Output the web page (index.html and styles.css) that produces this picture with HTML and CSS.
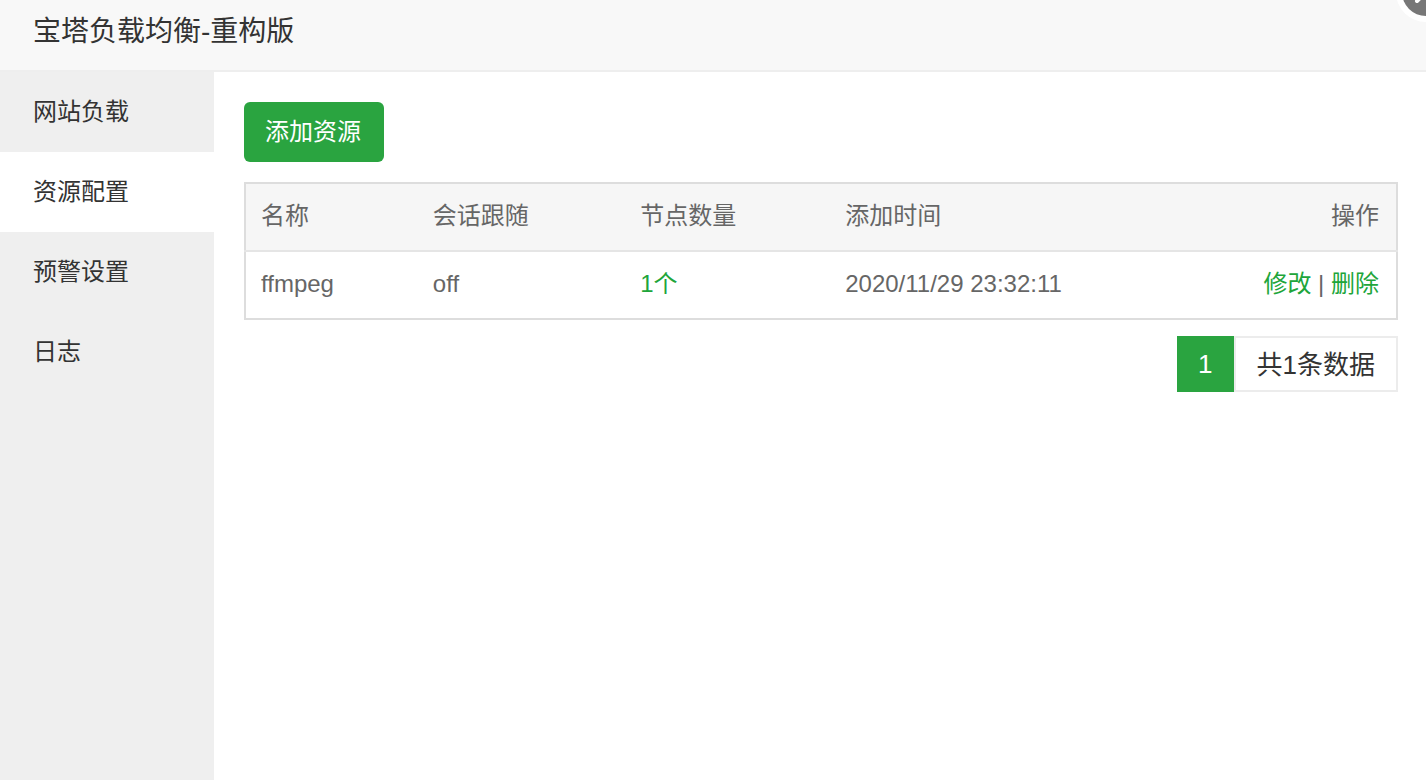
FILE: index.html
```html
<!DOCTYPE html>
<html lang="zh-CN">
<head>
    <meta charset="UTF-8">
    <meta name="viewport" content="width=device-width, initial-scale=1.0">
    <title>宝塔负载均衡-重构版</title>
    <link rel="stylesheet" href="styles.css">
</head>
<body>

    <header class="title-bar">
        <h1>宝塔负载均衡-重构版</h1>
        <button class="close-btn" type="button" aria-label="关闭">
            <svg width="60" height="60" viewBox="0 0 60 60">
                <circle cx="30" cy="30" r="30" fill="#fff"/>
                <circle cx="30" cy="30" r="24" fill="#777"/>
                <path d="M21 39 39 21M21 21 39 39" stroke="#fff" stroke-width="4" stroke-linecap="round"/>
            </svg>
        </button>
    </header>

    <div class="layout">
        <!-- Side menu -->
        <nav class="menu">
            <a href="#">网站负载</a>
            <a href="#" class="active">资源配置</a>
            <a href="#">预警设置</a>
            <a href="#">日志</a>
        </nav>

        <main class="content">
            <button class="btn-add" type="button">添加资源</button>

            <table class="table">
                <thead>
                    <tr>
                        <th class="col-name">名称</th>
                        <th class="col-session">会话跟随</th>
                        <th class="col-nodes">节点数量</th>
                        <th>添加时间</th>
                        <th class="col-action">操作</th>
                    </tr>
                </thead>
                <tbody>
                    <tr>
                        <td>ffmpeg</td>
                        <td>off</td>
                        <td><a href="#">1个</a></td>
                        <td>2020/11/29 23:32:11</td>
                        <td class="col-action"><a href="#">修改</a> | <a href="#">删除</a></td>
                    </tr>
                </tbody>
            </table>

            <!-- Pagination -->
            <div class="page">
                <span class="page-current">1</span>
                <span class="page-count">共1条数据</span>
            </div>
        </main>
    </div>

</body>
</html>
```

FILE: styles.css
```css
* {
    margin: 0;
    padding: 0;
    box-sizing: border-box;
}

body {
    display: flex;
    flex-direction: column;
    min-height: 100vh;
    font-family: "Liberation Sans", "Noto Sans CJK SC", sans-serif;
    font-size: 24px;
    line-height: 32px;
    color: #333;
    background: #fff;
    overflow-x: hidden;
}

a {
    color: #20a53a;
    text-decoration: none;
}

button {
    border: none;
    font-family: inherit;
    cursor: pointer;
}

/* Title bar */
.title-bar {
    position: relative;
    padding: 12px 33px 18px;
    background: #f8f8f8;
    border-bottom: 2px solid #eee;
    overflow: hidden;
}

.title-bar h1 {
    font-size: 28px;
    line-height: 40px;
    font-weight: normal;
}

.close-btn {
    position: absolute;
    top: -38px;
    right: -30px;
    width: 60px;
    height: 60px;
    background: none;
}

.close-btn svg {
    display: block;
}

.layout {
    display: flex;
    flex: 1;
}

/* Side menu */
.menu {
    flex: none;
    width: 214px;
    background: #efefef;
}

.menu a {
    display: block;
    padding: 24px 33px;
    color: #333;
}

.menu a.active {
    background: #fff;
}

/* Content */
.content {
    flex: 1;
    padding: 30px 28px 30px 30px;
}

.btn-add {
    display: block;
    padding: 14px 23px 14px 21px;
    margin-bottom: 20px;
    font-size: 24px;
    line-height: 32px;
    color: #fff;
    background: #2aa440;
    border-radius: 6px;
}

.table {
    width: 100%;
    table-layout: fixed;
    border-collapse: collapse;
    border: 2px solid #ddd;
    color: #666;
}

.table th,
.table td {
    padding: 16px 17px 18px 15px;
    font-weight: normal;
    text-align: left;
    border-bottom: 2px solid #e5e5e5;
}

.table th {
    background: #f6f6f6;
}

.table tbody tr:last-child td {
    border-bottom: none;
}

.table .col-name {
    width: 15%;
}

.table .col-session {
    width: 18%;
}

.table .col-nodes {
    width: 17.8%;
}

.table .col-action {
    text-align: right;
}

/* Pagination */
.page {
    display: flex;
    justify-content: flex-end;
    margin-top: 16px;
    font-size: 26px;
}

.page-current {
    padding: 12px 21px;
    color: #fff;
    background: #2aa440;
}

.page-count {
    padding: 11px 21px 9px;
    border: 2px solid #ececec;
}
```
